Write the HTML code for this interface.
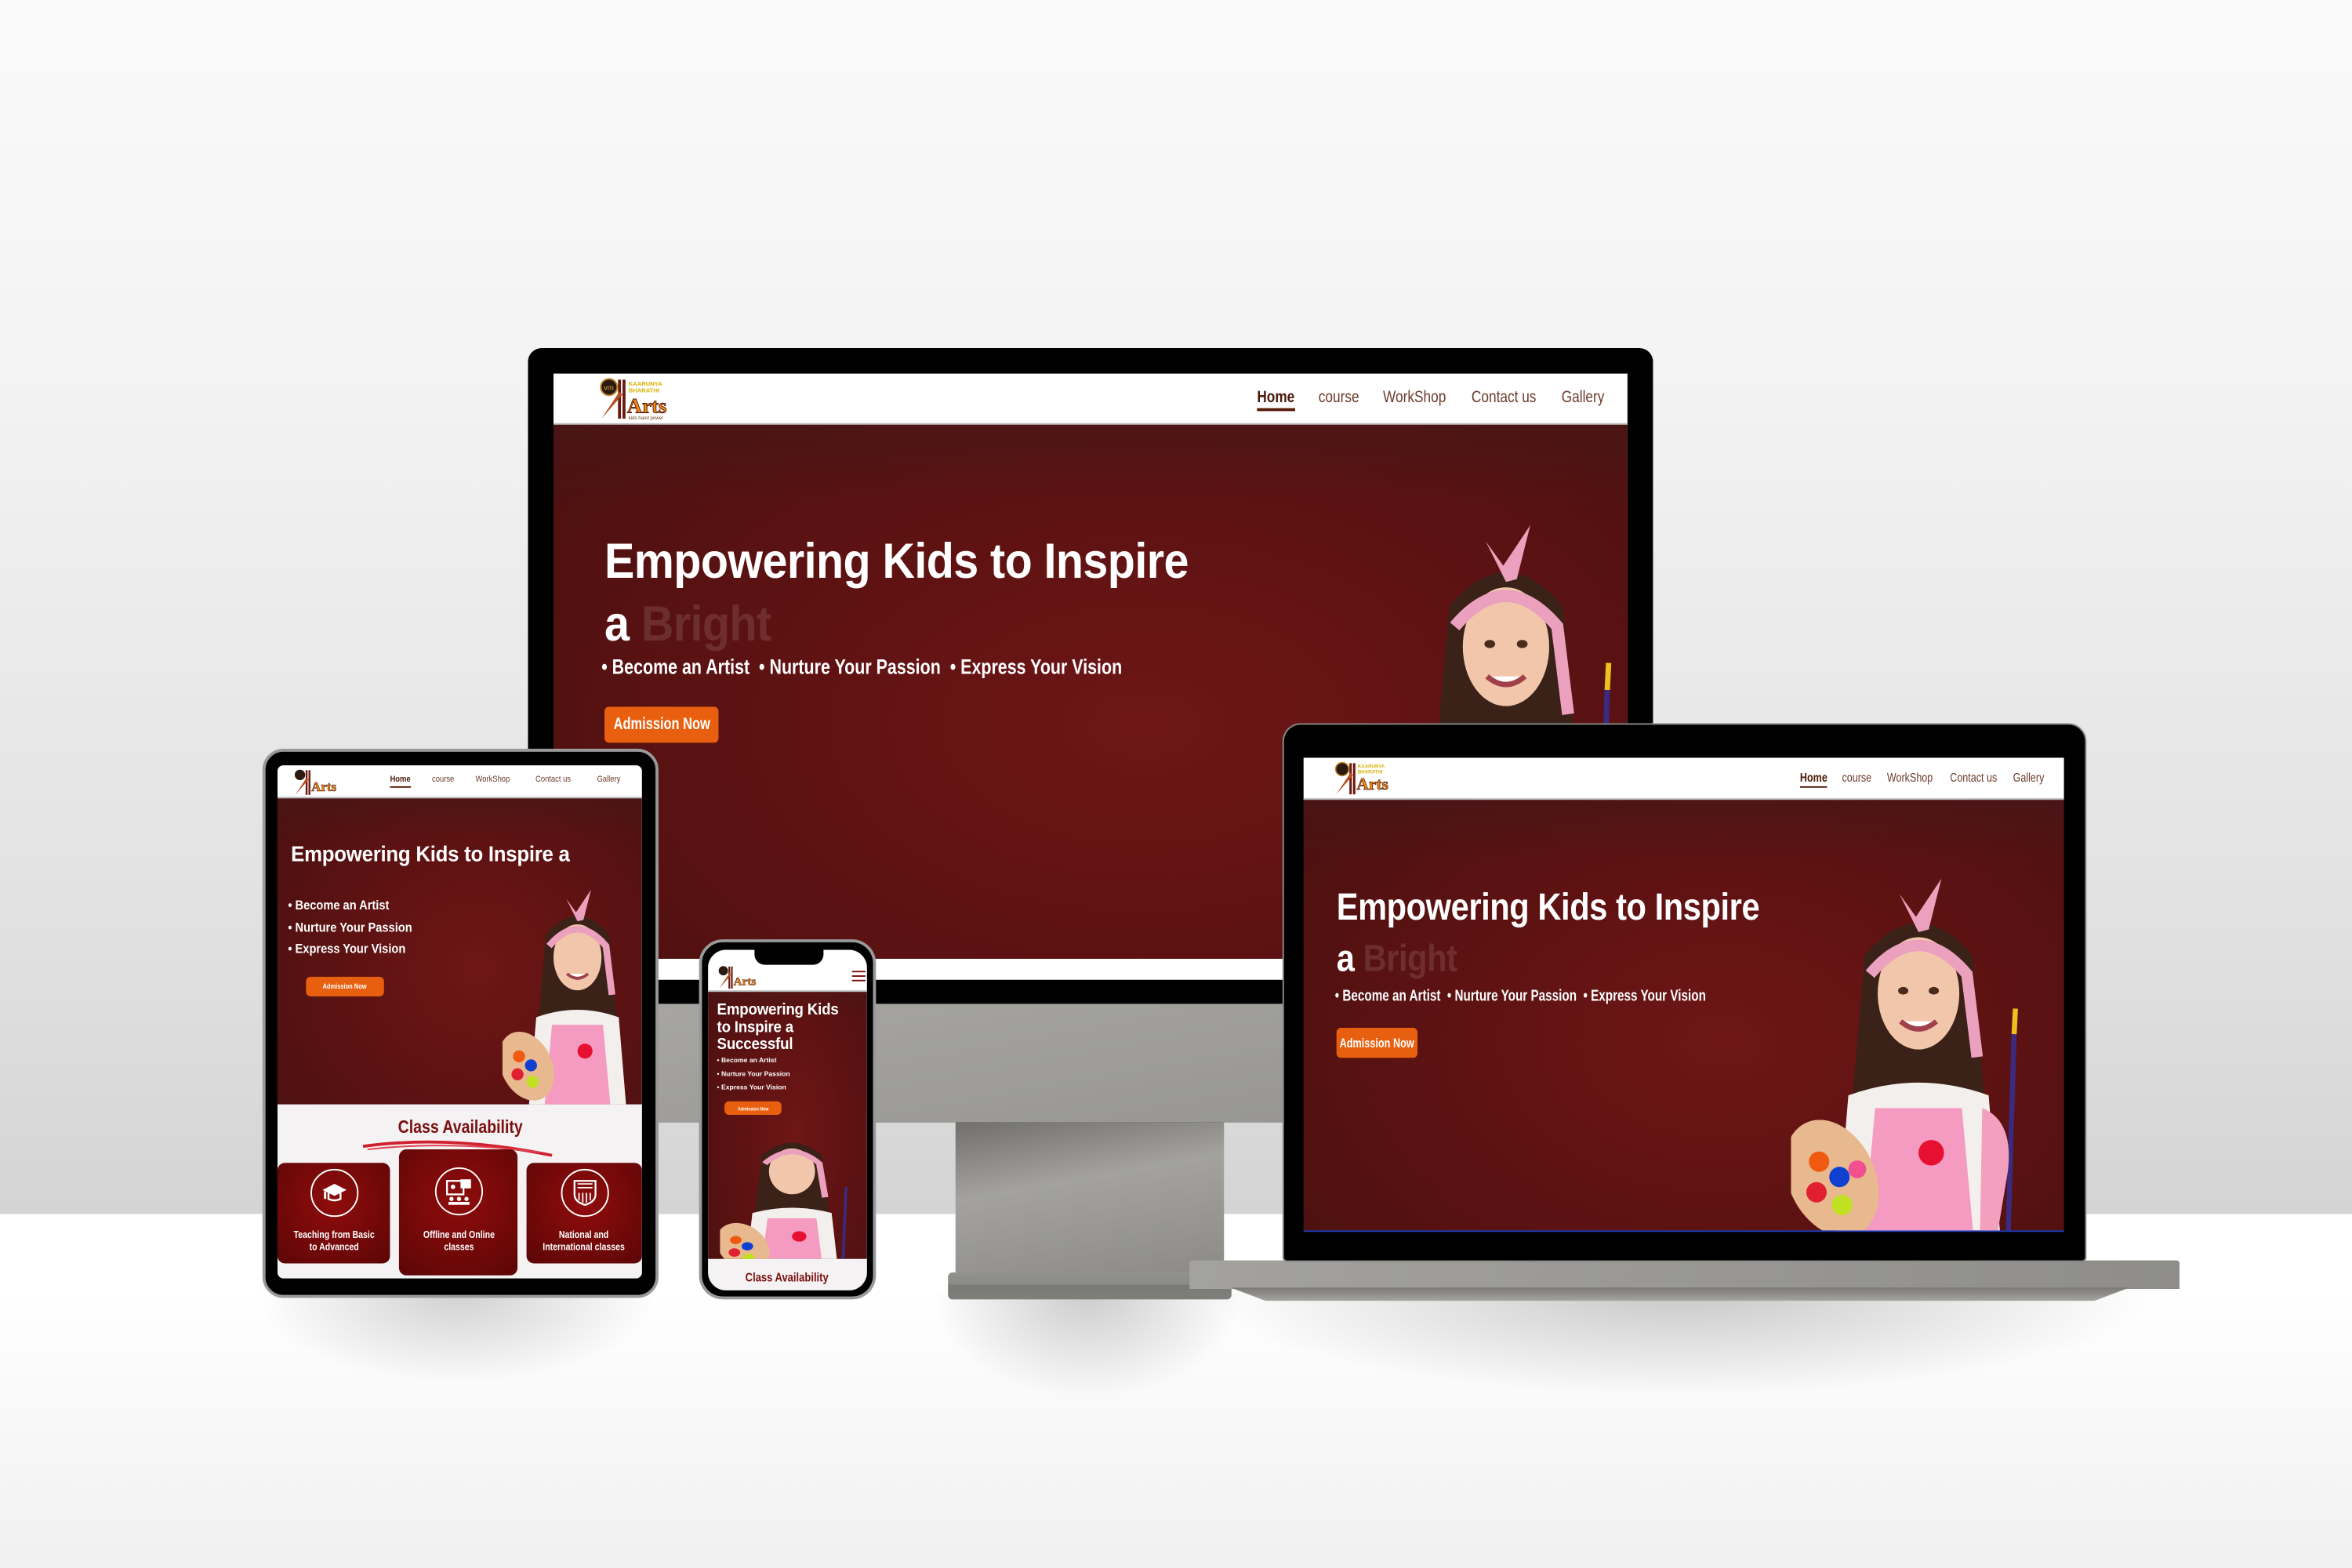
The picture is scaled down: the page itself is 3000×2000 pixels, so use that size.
<!DOCTYPE html>
<html><head><meta charset="utf-8">
<style>
*{margin:0;padding:0;box-sizing:border-box}
html,body{width:3000px;height:2000px;overflow:hidden;background:#f2f2f2}
#stage{position:absolute;left:0;top:0;width:1568px;height:1045px;transform-origin:0 0;transform:scale(1.91327,1.91388);
background:linear-gradient(180deg,#fafafa 0px,#f3f3f3 250px,#e2e2e2 600px,#d4d4d4 809px,#fff 809px,#fff 860px,#f0f0f0 1045px);font-family:"Liberation Sans",sans-serif;overflow:hidden}
.abs{position:absolute}
.hero{background:radial-gradient(ellipse at 55% 60%,#6e1616 0%,#5e1212 45%,#481010 100%);overflow:hidden}
.hero:before{content:"";position:absolute;left:0;top:0;right:0;height:22%;background:linear-gradient(#471818,rgba(71,24,24,0))}
.nav{background:#fff;position:absolute;left:0;top:0;right:0;border-bottom:1px solid #bbb}
.nav span{position:absolute;color:#6b3a2a;transform:scaleX(.82);transform-origin:0 50%;white-space:nowrap}
.nav span.h{color:#4a1a0a;font-weight:bold}
.nav span.h:after{content:"";position:absolute;left:0;right:0;bottom:-22%;height:12%;background:#5a1a0a}
.wt{color:#fff;position:absolute;white-space:nowrap;transform-origin:0 50%}
.h1{font-weight:bold;letter-spacing:-0.01em}
.narrow{font-weight:bold}
.btn{position:absolute;background:#e8600f;color:#fff;font-weight:bold;display:flex;align-items:center;justify-content:center;border-radius:3px;white-space:nowrap}
.btn span{display:inline-block;transform:scaleX(.78)}
.bright{color:rgba(255,255,255,0.12);font-weight:bold}
.card{position:absolute;background:radial-gradient(circle at 50% 40%,#900c0c,#5c0606);border-radius:5px;color:#fff;text-align:center;font-weight:bold;font-size:6.5px;line-height:7.5px}
.card .t{display:inline-block;transform:scaleX(.85)}
.card .ic{width:32px;height:32px;border:1.5px solid #fff;border-radius:50%;margin:8px auto 10px;display:flex;align-items:center;justify-content:center}
</style></head><body>
<div id="stage">

<div class="abs" style="left:170px;top:862px;width:270px;height:60px;background:radial-gradient(ellipse at 50% 0,rgba(0,0,0,0.18),rgba(0,0,0,0) 70%)"></div>
<div class="abs" style="left:620px;top:862px;width:210px;height:70px;background:radial-gradient(ellipse at 50% 0,rgba(0,0,0,0.2),rgba(0,0,0,0) 70%)"></div>
<div class="abs" style="left:800px;top:860px;width:640px;height:70px;background:radial-gradient(ellipse at 50% 0,rgba(0,0,0,0.22),rgba(0,0,0,0) 70%)"></div>

<!-- MONITOR -->
<div class="abs" style="left:637px;top:745px;width:179px;height:106px;background:linear-gradient(170deg,#6d6c68 0%,#a3a29e 40%,#8b8a86 100%)"></div>
<div class="abs" style="left:632px;top:848px;width:189px;height:18px;border-radius:3px;background:linear-gradient(#929290 0,#8a8a86 45%,#7a7a76 46%,#7e7e7a 100%)"></div>
<div class="abs" style="left:352px;top:232px;width:750px;height:516px;border-radius:9px 9px 0 0;background:#000;overflow:hidden">
  <div class="abs" style="left:0;top:437px;width:750px;height:79px;background:linear-gradient(170deg,#a8a7a3,#93928e)"></div>
  <div class="abs" style="left:17px;top:17px;width:716px;height:404px;background:#fff"></div>
  <div class="abs hero" style="left:17px;top:17px;width:716px;height:390px">
    <div class="nav" style="height:34px">
      <svg class="abs" style="left:30px;top:2px" width="52" height="30" viewBox="0 0 52 30">
        <circle cx="7" cy="7" r="5.5" fill="#2a1a10" stroke="#c28a2a" stroke-width="1"/><text x="3.5" y="9" font-size="5" fill="#e0a840" font-family="Liberation Sans">vm</text>
        <rect x="13" y="2" width="2" height="26" fill="#6b1a10"/><rect x="16" y="2" width="2" height="26" fill="#6b1a10"/>
        <path d="M2 28 L16 12 L14 10 Z" fill="#b84a1a"/>
        <text x="20" y="6" font-size="4" fill="#d8b000" font-weight="bold" font-family="Liberation Sans">KAARUNYA</text>
        <text x="20" y="10.5" font-size="4" fill="#d8b000" font-weight="bold" font-family="Liberation Sans">BHARATHI</text>
        <text x="19" y="24" font-size="14" fill="#f08a10" stroke="#5a1a0a" stroke-width="0.5" font-weight="bold" font-family="Liberation Serif">Arts</text>
        <text x="20" y="28.5" font-size="3.2" fill="#6b3a1a" font-family="Liberation Sans">kids hand power</text>
      </svg>
      <span class="h" style="left:469px;top:10px;font-size:11px">Home</span>
      <span style="left:510px;top:10px;font-size:11px">course</span>
      <span style="left:553px;top:10px;font-size:11px">WorkShop</span>
      <span style="left:612px;top:10px;font-size:11px">Contact us</span>
      <span style="left:672px;top:10px;font-size:11px">Gallery</span>
    </div>
    <div class="wt h1" style="left:34px;top:106px;font-size:33px;transform:scaleX(.91)">Empowering Kids to Inspire</div>
    <div class="wt h1" style="left:34px;top:148px;font-size:33px;transform:scaleX(.91)">a <span class="bright">Bright</span></div>
    <div class="wt narrow" style="left:32px;top:187px;font-size:14px;transform:scaleX(.8)">• Become an Artist &nbsp;• Nurture Your Passion &nbsp;• Express Your Vision</div>
    <div class="btn" style="left:34px;top:222px;width:76px;height:24px;font-size:11px"><span>Admission Now</span></div>
    <svg class="abs girl" style="left:545px;top:92px" width="180" height="270" viewBox="0 0 200 300">
      <path d="M58 70 Q100 20 142 70 L156 230 Q100 245 44 230 Z" fill="#3a2218"/>
      <path d="M45 180 Q100 160 155 180 L165 300 L35 300 Z" fill="#f3efec"/>
      <path d="M66 190 L134 190 L144 300 L56 300 Z" fill="#f59ac0"/>
      <circle cx="110" cy="225" r="10" fill="#e81030"/>
      <ellipse cx="100" cy="100" rx="32" ry="44" fill="#f2c6ab"/>
      <path d="M62 85 Q100 40 138 85 L146 150" stroke="#eba0bd" stroke-width="9" fill="none"/>
      <path d="M100 52 L85 22 L98 40 L118 10 L108 50 Z" fill="#eba0bd"/>
      <ellipse cx="88" cy="98" rx="4" ry="3" fill="#4a2a1a"/><ellipse cx="112" cy="98" rx="4" ry="3" fill="#4a2a1a"/>
      <path d="M86 122 Q100 134 114 122" stroke="#a0404a" stroke-width="4" fill="#fff"/>
      <ellipse cx="32" cy="245" rx="34" ry="48" fill="#e8b88e" transform="rotate(-25 32 245)"/>
      <circle cx="22" cy="232" r="8" fill="#f05a10"/><circle cx="38" cy="244" r="8" fill="#1040d0"/><circle cx="20" cy="256" r="8" fill="#e02030"/><circle cx="40" cy="266" r="8" fill="#c0e020"/><circle cx="52" cy="238" r="7" fill="#f05090"/>
      <line x1="175" y1="130" x2="170" y2="300" stroke="#3a2a80" stroke-width="4"/><line x1="176" y1="112" x2="175" y2="132" stroke="#f0c020" stroke-width="4"/>
      <path d="M150 190 Q175 200 170 240 L160 300 L148 300 Z" fill="#f2a0bd"/>
    </svg>
  </div>
</div>

<!-- LAPTOP -->
<div class="abs" style="left:793px;top:840px;width:660px;height:19px;background:linear-gradient(100deg,#a3a29e,#8e8d89);border-radius:2px 2px 0 0"></div>
<div class="abs" style="left:820px;top:858px;width:600px;height:9px;background:linear-gradient(#7a7975,#a5a4a0);clip-path:polygon(0 0,100% 0,96% 100%,4% 100%)"></div>
<div class="abs" style="left:855px;top:482px;width:536px;height:359px;border-radius:12px 12px 3px 3px;background:#000;border:1.5px solid #8a8a88;overflow:hidden">
  <div class="abs hero" style="left:13px;top:22px;width:507px;height:316px;border-bottom:1px solid #2040c0">
    <div class="nav" style="height:28px">
      <svg class="abs" style="left:20px;top:2px" width="42" height="24" viewBox="0 0 52 30">
        <circle cx="7" cy="7" r="5.5" fill="#2a1a10" stroke="#c28a2a" stroke-width="1"/>
        <rect x="13" y="2" width="2" height="26" fill="#6b1a10"/><rect x="16" y="2" width="2" height="26" fill="#6b1a10"/>
        <path d="M2 28 L16 12 L14 10 Z" fill="#b84a1a"/>
        <text x="20" y="6" font-size="4" fill="#d8b000" font-weight="bold" font-family="Liberation Sans">KAARUNYA</text>
        <text x="20" y="10.5" font-size="4" fill="#d8b000" font-weight="bold" font-family="Liberation Sans">BHARATHI</text>
        <text x="19" y="24" font-size="14" fill="#f08a10" stroke="#5a1a0a" stroke-width="0.5" font-weight="bold" font-family="Liberation Serif">Arts</text>
      </svg>
      <span class="h" style="left:331px;top:9px;font-size:8px">Home</span>
      <span style="left:359px;top:9px;font-size:8px">course</span>
      <span style="left:389px;top:9px;font-size:8px">WorkShop</span>
      <span style="left:431px;top:9px;font-size:8px">Contact us</span>
      <span style="left:473px;top:9px;font-size:8px">Gallery</span>
    </div>
    <div class="wt h1" style="left:22px;top:86px;font-size:25px;transform:scaleX(.87)">Empowering Kids to Inspire</div>
    <div class="wt h1" style="left:22px;top:120px;font-size:25px;transform:scaleX(.87)">a <span class="bright">Bright</span></div>
    <div class="wt narrow" style="left:21px;top:153px;font-size:10.5px;transform:scaleX(.76)">• Become an Artist &nbsp;• Nurture Your Passion &nbsp;• Express Your Vision</div>
    <div class="btn" style="left:22px;top:180px;width:54px;height:20px;font-size:8.5px"><span>Admission Now</span></div>
    <svg class="abs" style="left:325px;top:72px" width="170" height="255" viewBox="0 0 200 300">
      <path d="M58 70 Q100 20 142 70 L156 230 Q100 245 44 230 Z" fill="#3a2218"/>
      <path d="M45 180 Q100 160 155 180 L165 300 L35 300 Z" fill="#f3efec"/>
      <path d="M66 190 L134 190 L144 300 L56 300 Z" fill="#f59ac0"/>
      <circle cx="110" cy="225" r="10" fill="#e81030"/>
      <ellipse cx="100" cy="100" rx="32" ry="44" fill="#f2c6ab"/>
      <path d="M62 85 Q100 40 138 85 L146 150" stroke="#eba0bd" stroke-width="9" fill="none"/>
      <path d="M100 52 L85 22 L98 40 L118 10 L108 50 Z" fill="#eba0bd"/>
      <ellipse cx="88" cy="98" rx="4" ry="3" fill="#4a2a1a"/><ellipse cx="112" cy="98" rx="4" ry="3" fill="#4a2a1a"/>
      <path d="M86 122 Q100 134 114 122" stroke="#a0404a" stroke-width="4" fill="#fff"/>
      <ellipse cx="32" cy="245" rx="34" ry="48" fill="#e8b88e" transform="rotate(-25 32 245)"/>
      <circle cx="22" cy="232" r="8" fill="#f05a10"/><circle cx="38" cy="244" r="8" fill="#1040d0"/><circle cx="20" cy="256" r="8" fill="#e02030"/><circle cx="40" cy="266" r="8" fill="#c0e020"/><circle cx="52" cy="238" r="7" fill="#f05090"/>
      <line x1="175" y1="130" x2="170" y2="300" stroke="#3a2a80" stroke-width="4"/><line x1="176" y1="112" x2="175" y2="132" stroke="#f0c020" stroke-width="4"/>
      <path d="M150 190 Q175 200 170 240 L160 300 L148 300 Z" fill="#f2a0bd"/>
    </svg>
  </div>
</div>

<!-- TABLET -->
<div class="abs" style="left:175px;top:499px;width:264px;height:366px;border-radius:14px;background:#000;border:2px solid #999;overflow:hidden">
  <div class="abs" style="left:8px;top:9px;width:243px;height:342px;background:#f4f2f2;border-radius:4px;overflow:hidden">
    <div class="abs hero" style="left:0;top:0;width:243px;height:226px">
      <div class="nav" style="height:22px">
        <svg class="abs" style="left:10px;top:2px" width="34" height="19" viewBox="0 0 52 30">
          <circle cx="7" cy="7" r="5.5" fill="#2a1a10"/>
          <rect x="13" y="2" width="2" height="26" fill="#6b1a10"/><rect x="16" y="2" width="2" height="26" fill="#6b1a10"/>
          <path d="M2 28 L16 12 L14 10 Z" fill="#b84a1a"/>
          <text x="19" y="24" font-size="14" fill="#f08a10" stroke="#5a1a0a" stroke-width="0.5" font-weight="bold" font-family="Liberation Serif">Arts</text>
        </svg>
        <span class="h" style="left:75px;top:7px;font-size:6px">Home</span>
        <span style="left:103px;top:7px;font-size:6px">course</span>
        <span style="left:132px;top:7px;font-size:6px">WorkShop</span>
        <span style="left:172px;top:7px;font-size:6px">Contact us</span>
        <span style="left:213px;top:7px;font-size:6px">Gallery</span>
      </div>
      <div class="wt h1" style="left:9px;top:52px;font-size:14.5px;transform:scaleX(.93)">Empowering Kids to Inspire a</div>
      <div class="wt narrow" style="left:7px;top:86px;font-size:8.5px;line-height:14.5px;transform:scaleX(.9)">• Become an Artist<br>• Nurture Your Passion<br>• Express Your Vision</div>
      <div class="btn" style="left:19px;top:141px;width:52px;height:13px;font-size:5px"><span>Admission Now</span></div>
      <svg class="abs" style="left:150px;top:78px" width="100" height="150" viewBox="0 0 200 300">
        <path d="M58 70 Q100 20 142 70 L156 230 Q100 245 44 230 Z" fill="#3a2218"/>
        <path d="M45 180 Q100 160 155 180 L165 300 L35 300 Z" fill="#f3efec"/>
        <path d="M66 190 L134 190 L144 300 L56 300 Z" fill="#f59ac0"/>
        <circle cx="110" cy="225" r="10" fill="#e81030"/>
        <ellipse cx="100" cy="100" rx="32" ry="44" fill="#f2c6ab"/>
        <path d="M62 85 Q100 40 138 85 L146 150" stroke="#eba0bd" stroke-width="9" fill="none"/>
        <path d="M100 52 L85 22 L98 40 L118 10 L108 50 Z" fill="#eba0bd"/>
        <path d="M86 122 Q100 134 114 122" stroke="#a0404a" stroke-width="4" fill="#fff"/>
        <ellipse cx="32" cy="245" rx="34" ry="48" fill="#e8b88e" transform="rotate(-25 32 245)"/>
        <circle cx="22" cy="232" r="8" fill="#f05a10"/><circle cx="38" cy="244" r="8" fill="#1040d0"/><circle cx="20" cy="256" r="8" fill="#e02030"/><circle cx="40" cy="266" r="8" fill="#c0e020"/>
      </svg>
    </div>
    <div class="abs narrow" style="left:0;width:243px;top:234px;text-align:center;color:#7a1010;font-size:12px"><span style="display:inline-block;transform:scaleX(.85)">Class Availability</span></div>
    <svg class="abs" style="left:55px;top:248px" width="130" height="14" viewBox="0 0 130 14"><path d="M2 6 Q60 -2 128 12" stroke="#d02030" stroke-width="2" fill="none"/><path d="M5 8 Q60 2 120 10" stroke="#e04050" stroke-width="1" fill="none"/></svg>
    <div class="card" style="left:0;top:265px;width:75px;height:67px"><div class="ic" style="margin:4px auto 9px"><svg width="16" height="14" viewBox="0 0 16 14"><path d="M8 1 L16 5 L8 9 L0 5 Z" fill="#fff"/><path d="M4 7 V11 Q8 13 12 11 V7" stroke="#fff" fill="none" stroke-width="1.3"/><rect x="1" y="6" width="1.5" height="5" fill="#fff"/></svg></div><span class="t">Teaching from Basic<br>to Advanced</span></div>
    <div class="card" style="left:81px;top:256px;width:79px;height:84px"><div class="ic" style="margin:12px auto 10px"><svg width="18" height="18" viewBox="0 0 18 18"><rect x="1" y="2" width="11" height="9" stroke="#fff" fill="none" stroke-width="1.2"/><path d="M10 1 H17 V7 H10 Z" fill="#fff"/><circle cx="5" cy="6" r="1.5" fill="#fff"/><circle cx="4" cy="14" r="1.4" fill="#fff"/><circle cx="9" cy="14" r="1.4" fill="#fff"/><circle cx="14" cy="14" r="1.4" fill="#fff"/><rect x="2" y="16" width="14" height="2" fill="#fff"/></svg></div><span class="t">Offline and Online<br>classes</span></div>
    <div class="card" style="left:166px;top:265px;width:77px;height:67px"><div class="ic" style="margin:4px auto 9px"><svg width="16" height="18" viewBox="0 0 16 18"><path d="M1 1 H15 V10 Q15 15 8 17 Q1 15 1 10 Z" stroke="#fff" fill="none" stroke-width="1.2"/><path d="M3 3 H13 M3 5.5 H13 M4 9 V14 M6.5 9 V15.5 M9 9 V15.5 M11.5 9 V14" stroke="#fff" stroke-width="0.9"/></svg></div><span class="t">National and<br>International classes</span></div>
  </div>
</div>

<!-- PHONE -->
<div class="abs" style="left:466px;top:626px;width:118px;height:240px;border-radius:16px;background:#000;border:2px solid #999;overflow:hidden">
  <div class="abs" style="left:4px;top:5px;width:106px;height:227px;border-radius:12px;background:#f4f2f2;overflow:hidden">
    <div class="abs hero" style="left:0;top:0;width:106px;height:206px">
      <div class="nav" style="height:28px">
        <svg class="abs" style="left:5px;top:10px" width="32" height="17" viewBox="0 0 52 30">
          <circle cx="7" cy="7" r="5.5" fill="#2a1a10"/>
          <rect x="13" y="2" width="2" height="26" fill="#6b1a10"/><rect x="16" y="2" width="2" height="26" fill="#6b1a10"/>
          <path d="M2 28 L16 12 L14 10 Z" fill="#b84a1a"/>
          <text x="19" y="24" font-size="14" fill="#f08a10" stroke="#5a1a0a" stroke-width="0.5" font-weight="bold" font-family="Liberation Serif">Arts</text>
        </svg>
        <div class="abs" style="left:96px;top:14px;width:9px;height:1.3px;background:#7a1010;box-shadow:0 3px 0 #7a1010,0 6px 0 #7a1010"></div>
      </div>
      <div class="wt h1" style="left:6px;top:35px;font-size:10.5px;line-height:11.5px;transform:scaleX(.93)">Empowering Kids<br>to Inspire a<br>Successful</div>
      <div class="wt narrow" style="left:6px;top:69px;font-size:4.5px;line-height:9px">• Become an Artist<br>• Nurture Your Passion<br>• Express Your Vision</div>
      <div class="btn" style="left:11px;top:101px;width:38px;height:9px;font-size:3.5px"><span>Admission Now</span></div>
      <svg class="abs" style="left:8px;top:113px" width="96" height="104" viewBox="0 0 200 300" preserveAspectRatio="none">
        <path d="M58 70 Q100 20 142 70 L156 230 Q100 245 44 230 Z" fill="#3a2218"/>
        <path d="M45 180 Q100 160 155 180 L165 300 L35 300 Z" fill="#f3efec"/>
        <path d="M66 190 L134 190 L144 300 L56 300 Z" fill="#f59ac0"/>
        <circle cx="110" cy="225" r="10" fill="#e81030"/>
        <ellipse cx="100" cy="100" rx="32" ry="44" fill="#f2c6ab"/>
        <path d="M62 85 Q100 40 138 85 L146 150" stroke="#eba0bd" stroke-width="9" fill="none"/>
        <ellipse cx="32" cy="245" rx="34" ry="48" fill="#e8b88e" transform="rotate(-25 32 245)"/>
        <circle cx="22" cy="232" r="8" fill="#f05a10"/><circle cx="38" cy="244" r="8" fill="#1040d0"/><circle cx="20" cy="256" r="8" fill="#e02030"/><circle cx="40" cy="266" r="8" fill="#c0e020"/>
        <line x1="175" y1="130" x2="170" y2="300" stroke="#3a2a80" stroke-width="4"/>
      </svg>
    </div>
    <div class="abs narrow" style="left:0;width:106px;top:214px;text-align:center;color:#7a1010;font-size:8px"><span style="display:inline-block;transform:scaleX(.85)">Class Availability</span></div>
  </div>
  <div class="abs" style="left:35px;top:3px;width:46px;height:12px;background:#000;border-radius:0 0 7px 7px"></div>
</div>

</div>
</body></html>
